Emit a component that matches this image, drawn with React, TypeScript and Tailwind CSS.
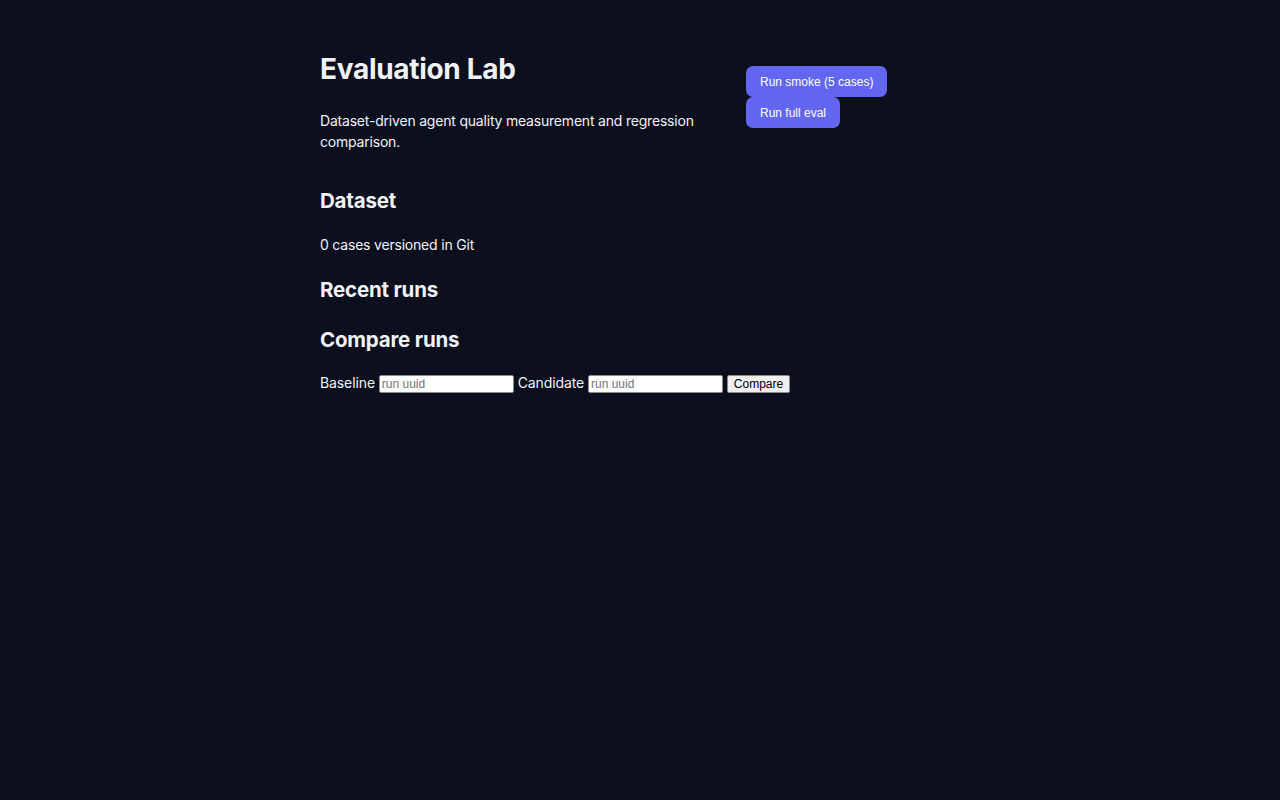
export default function App() {
  return (
    <div className="min-h-screen bg-[#0b0f1e] text-[#f1f2f6] font-['Inter',sans-serif]">
      <main className="mx-auto w-[640px] pt-[51px]">
        <header className="flex gap-[26px]">
          <div className="w-[400px] shrink-0">
            <h1 className="text-[28px] leading-[36px] font-bold tracking-[-0.3px]">Evaluation Lab</h1>
            <p className="mt-[23px] text-[14px] leading-[21px] tracking-[-0.2px]">
              Dataset-driven agent quality measurement and regression comparison.
            </p>
          </div>
          <div className="mt-[15px] flex w-[214px] flex-wrap content-start items-start">
            <button className="h-[31px] rounded-[7px] bg-[#6366f1] px-[14px] font-['Liberation_Sans',sans-serif] text-[12px] text-white">
              Run smoke (5 cases)
            </button>
            <button className="h-[31px] rounded-[7px] bg-[#6366f1] px-[14px] font-['Liberation_Sans',sans-serif] text-[12px] text-white">
              Run full eval
            </button>
          </div>
        </header>

        <section className="mt-[35px]">
          <h2 className="text-[20.5px] leading-[28px] font-bold tracking-[-0.2px]">Dataset</h2>
          <p className="mt-[19px] text-[14px] leading-[22px] tracking-[-0.2px]">0 cases versioned in Git</p>
        </section>

        <section className="mt-[20px]">
          <h2 className="text-[20.5px] leading-[28px] font-bold tracking-[-0.2px]">Recent runs</h2>
        </section>

        <section className="mt-[22px]">
          <h2 className="text-[20.5px] leading-[28px] font-bold tracking-[-0.2px]">Compare runs</h2>
          <form className="mt-[18px] text-[14px] leading-[22px] tracking-[-0.1px]" onSubmit={(e) => e.preventDefault()}>
            <label>
              Baseline{' '}
              <input
                placeholder="run uuid"
                className="h-[18px] w-[135px] rounded-[2px] border border-[#8a8a8a] bg-white px-[2px] align-middle font-['Liberation_Sans',sans-serif] text-[12px] tracking-normal text-black placeholder:text-[#757575]"
              />
            </label>{' '}
            <label>
              Candidate{' '}
              <input
                placeholder="run uuid"
                className="h-[18px] w-[135px] rounded-[2px] border border-[#8a8a8a] bg-white px-[2px] align-middle font-['Liberation_Sans',sans-serif] text-[12px] tracking-normal text-black placeholder:text-[#757575]"
              />
            </label>{' '}
            <button
              type="submit"
              className="h-[18px] rounded-[2px] border border-[#8a8a8a] bg-[#efefef] px-[6px] align-middle font-['Liberation_Sans',sans-serif] text-[12px] leading-[14px] tracking-normal text-black"
            >
              Compare
            </button>
          </form>
        </section>
      </main>
    </div>
  );
}
